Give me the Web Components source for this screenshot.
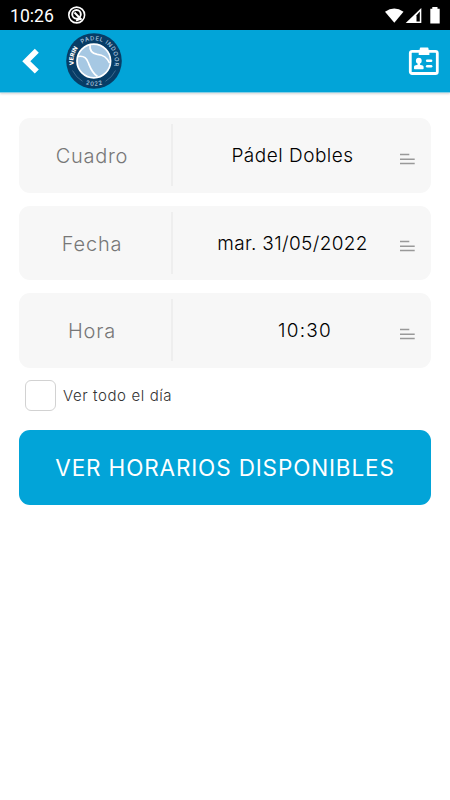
<!DOCTYPE html>
<html lang="es">
<head>
<meta charset="utf-8">
<meta name="viewport" content="width=device-width, initial-scale=1">
<title>Reservas</title>
<style>
  body {
    margin: 0;
    min-height: 100vh;
    background: #fff;
    font-family: Inter, "Open Sans", sans-serif;
    font-weight: 300;
    --brand: #02a4d8;
  }
  .fields {
    display: flex;
    flex-direction: column;
    gap: 13px;
    padding: 25px 19px 0;
  }
</style>
</head>
<body>
<status-bar>10:26</status-bar>
<app-header></app-header>
<main>
  <div class="fields">
    <picker-field style="--label-space: .7px; --value-space: .5px"><span slot="label">Cuadro</span>Pádel Dobles</picker-field>
    <picker-field style="--label-space: .8px; --value-space: .35px"><span slot="label">Fecha</span>mar. 31/05/2022</picker-field>
    <picker-field style="--label-space: .8px; --value-space: 1.200px; --value-shift: 12.500px"><span slot="label">Hora</span>10:30</picker-field>
  </div>
  <check-option>Ver todo el día</check-option>
  <action-button>VER HORARIOS DISPONIBLES</action-button>
</main>

<script>
class StatusBar extends HTMLElement {
  constructor() {
    super();
    this.attachShadow({ mode: 'open' });
  }

  connectedCallback() {
    this.shadowRoot.innerHTML = `
      <style>
        :host {
          display: flex;
          align-items: center;
          box-sizing: border-box;
          height: 30px;
          padding: 2px 9px 0 10px;
          background: #000;
          color: #fff;
          font: 400 17.6px/28px Roboto, sans-serif;
        }
        svg { display: block; flex: none; }
        .app { margin-left: 13px; }
        .system { margin-left: auto; }
      </style>
      <slot></slot>
      <svg class="app" width="20" height="20" viewBox="0 0 20 20" fill="none" stroke="#fff">
        <circle cx="9.700" cy="9" r="7.900" stroke-width="1.600"/>
        <circle cx="9.500" cy="8.300" r="4.300" stroke-width="1.900"/>
        <path d="M7.500 6.500l7 7.200M9 14.500l4.500-1.600" stroke-width="2"/>
      </svg>
      <svg class="system" width="56" height="20" viewBox="385 5 56 20">
        <path d="M385 10.800Q394.200 4.200 403.500 10.800L394.300 21.700Z" fill="#fff"/>
        <path d="M421.300 7v15h-15.600Z" fill="#fff"/>
        <path d="M416.500 14.300l3.300-3.800v9.900h-3.300Z" fill="#000"/>
        <path d="M430.300 7.800h2V6h5.200v1.800h2.200v14.700h-9.400Z" fill="#fff"/>
      </svg>
    `;
  }
}

class ClubLogo extends HTMLElement {
  constructor() {
    super();
    this.attachShadow({ mode: 'open' });
  }

  connectedCallback() {
    this.shadowRoot.innerHTML = `
      <style>
        :host { display: block; }
        svg { display: block; }
        text { font: 500 5.800px Inter, sans-serif; fill: #b8cfe1; }
        .name { font-weight: 800; fill: #fff; }
      </style>
      <svg width="56" height="56" viewBox="0 0 56 56">
        <defs>
          <path id="left" d="M10.400 38.600A20.600 20.600 0 0 1 17.100 10.500"/>
          <path id="top" d="M14.600 12.100A20.800 20.800 0 0 1 46.700 37.100"/>
          <path id="bottom" d="M8 42.500A24.700 24.700 0 0 0 48 42.500"/>
        </defs>
        <circle cx="28" cy="28" r="27.800" fill="#073d66"/>
        <circle cx="27.800" cy="28" r="17" fill="#a6c8e3"/>
        <g fill="none" stroke="#fff" stroke-width="1.700">
          <circle cx="27.800" cy="28" r="16.800"/>
          <path d="M24 12C23.500 17 26 20.500 31.300 21.300C38 22 41 24.500 43.500 30"/>
          <path d="M12 23.500C17 22.500 20.500 25 22 29C24.500 35 25.500 39.500 31.500 43.500"/>
        </g>
        <path d="M6.500 37.500Q10 44.500 16.500 48.300M49.500 37.500Q46 44.500 39.500 48.300" fill="none" stroke="#5f86a5" stroke-width=".6"/>
        <text class="name"><textPath href="#left" startOffset="7" textLength="18">VERIN</textPath></text>
        <text><textPath href="#top" startOffset="2" textLength="50">PADEL INDOOR</textPath></text>
        <text><textPath href="#bottom" startOffset="50%" text-anchor="middle" textLength="17">2022</textPath></text>
      </svg>
    `;
  }
}

class AppHeader extends HTMLElement {
  constructor() {
    super();
    this.attachShadow({ mode: 'open' });
  }

  connectedCallback() {
    this.shadowRoot.innerHTML = `
      <style>
        :host {
          display: flex;
          align-items: center;
          box-sizing: border-box;
          height: 63px;
          padding: 0 11px 1px 21px;
          background: var(--brand);
          border-bottom: 1px solid #8acfe5;
          box-shadow: 0 1px 2px rgba(0, 0, 0, .16);
        }
        svg { display: block; }
        club-logo { margin-left: 26px; }
        .card { margin-left: auto; }
      </style>
      <svg width="19" height="28" viewBox="0 0 19 28">
        <path d="M15.800 3.800L5.300 14.200l10.500 10.400" fill="none" stroke="#fff" stroke-width="5.700"/>
      </svg>
      <club-logo></club-logo>
      <svg class="card" width="31" height="30" viewBox="0 0 31 30" fill="#fff">
        <rect x="2.300" y="5.300" width="27" height="22.200" rx="1.800" fill="none" stroke="#fff" stroke-width="2.800"/>
        <path d="M11.800 3.700V2.500q0-.9.900-.9h6.900q.9 0 .9.900v1.200h.9v5.300H10.700V3.700Z"/>
        <circle cx="10.800" cy="14.700" r="2.900"/>
        <path d="M9.600 16.500h2.400v2.200l2.700.8q.9.400.9 1.400v1.700q0 .6-.6.600H6.600q-.6 0-.6-.6v-1.700q0-1 .9-1.400l2.700-.8Z"/>
        <rect x="17.900" y="13.400" width="6.500" height="2.700" rx="1.300"/>
        <rect x="17.900" y="18.900" width="6.500" height="2.700" rx="1.300"/>
      </svg>
    `;
  }
}

class PickerField extends HTMLElement {
  constructor() {
    super();
    this.attachShadow({ mode: 'open' });
  }

  connectedCallback() {
    this.shadowRoot.innerHTML = `
      <style>
        :host {
          display: grid;
          grid-template-columns: 154px 1fr 48px;
          align-items: center;
          height: 74.500px;
          border-radius: 11px;
          background: #f7f7f7;
        }
        .label {
          box-sizing: border-box;
          height: 62px;
          padding-right: 6px;
          border-right: 2px solid #eee;
          color: #777;
          font-size: 20px;
          line-height: 64px;
          letter-spacing: var(--label-space);
          text-align: center;
        }
        .value {
          padding-left: calc(29px + var(--value-shift, 0px) * 2);
          padding-top: 1px;
          color: #000;
          font-size: 19px;
          letter-spacing: var(--value-space);
          text-align: center;
          white-space: nowrap;
        }
        svg { display: block; margin: 7px 0 0 17px; }
      </style>
      <div class="label"><slot name="label"></slot></div>
      <div class="value"><slot></slot></div>
      <svg width="15" height="12" viewBox="0 0 15 12" stroke="#999" stroke-width="1.600">
        <path d="M0 1.500h9.300M0 6.200h14.700M0 10.500h14.700"/>
      </svg>
    `;
  }
}

class CheckOption extends HTMLElement {
  constructor() {
    super();
    this.attachShadow({ mode: 'open' });
  }

  connectedCallback() {
    this.shadowRoot.innerHTML = `
      <style>
        :host {
          display: flex;
          align-items: center;
          gap: 7px;
          margin: 12px 25px 0;
          color: #333;
          font-size: 15px;
          letter-spacing: .6px;
        }
        .box {
          box-sizing: border-box;
          width: 31px;
          height: 31px;
          border: 1px solid #d2d2d2;
          border-radius: 6px;
          background: #fff;
        }
      </style>
      <span class="box"></span>
      <slot></slot>
    `;
  }
}

class ActionButton extends HTMLElement {
  constructor() {
    super();
    this.attachShadow({ mode: 'open' });
  }

  connectedCallback() {
    this.shadowRoot.innerHTML = `
      <style>
        :host { display: block; margin: 19px 19px 0; }
        button {
          display: block;
          width: 100%;
          height: 75px;
          padding: 0;
          border: 0;
          border-radius: 11px;
          background: var(--brand);
          color: #fff;
          font: inherit;
          font-weight: 400;
          font-size: 22.500px;
          letter-spacing: .85px;
          white-space: nowrap;
        }
      </style>
      <button type="button"><slot></slot></button>
    `;
  }
}

customElements.define('status-bar', StatusBar);
customElements.define('club-logo', ClubLogo);
customElements.define('app-header', AppHeader);
customElements.define('picker-field', PickerField);
customElements.define('check-option', CheckOption);
customElements.define('action-button', ActionButton);
</script>
</body>
</html>
